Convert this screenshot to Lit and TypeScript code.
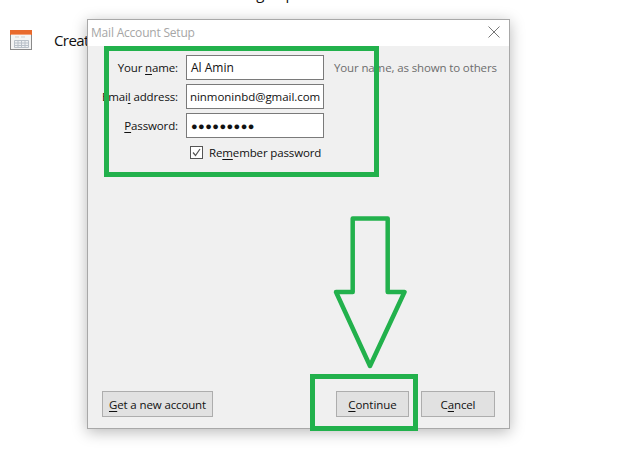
import { LitElement, html, css, svg } from "lit";
import { customElement } from "lit/decorators.js";

@customElement("app-root")
export class AppRoot extends LitElement {
  static styles = css`
    :host { display: block; }
    * { box-sizing: border-box; }
    .page {
      position: relative; width: 634px; height: 461px; overflow: hidden; background: #fff;
      font-family: "Open Sans", "Noto Sans", sans-serif; color: #111;
    }
    .cut { position: absolute; left: 216px; top: -16px; font-size: 15px; line-height: 18px; white-space: nowrap; word-spacing: 8px; }
    .task { display: flex; align-items: center; padding: 29px 0 0 10px; gap: 22px; font-size: 15px; letter-spacing: -.6px; height: 50px; }
    .task svg { display: block; flex: none; margin-top: 1px; }
    .dialog {
      position: absolute; left: 87px; top: 19px; width: 423px; height: 410px;
      border: 1px solid #a8a8a8; background: #f0f0f0; display: flex; flex-direction: column;
      box-shadow: 0 3px 14px rgba(0,0,0,.28);
    }
    .title {
      height: 26px; flex: none; background: #fff; display: flex; align-items: center; justify-content: space-between;
      padding: 0 9px 2px 3px; color: #a6a6a6; font-size: 12px; letter-spacing: -.2px;
    }
    .close { display: block; }
    .body { flex: 1; display: flex; flex-direction: column; justify-content: space-between; padding: 9px 14px 11px 14px; font-size: 11.5px; letter-spacing: -.13px; }
    .form { display: grid; grid-template-columns: 76px 138px auto; column-gap: 8px; row-gap: 4px; align-items: center; }
    .label { text-align: right; white-space: nowrap; justify-self: end; }
    .input {
      height: 25px; border: 1px solid #7a7a7a; background: #fff; display: flex; align-items: center; padding: 0 4px; white-space: nowrap; overflow: hidden; font-size: 12px; letter-spacing: 0;
    }
    .mail { padding: 0 3px; font-size: 11.5px; letter-spacing: -.05px; }
    .dots { font-size: 11px; letter-spacing: .45px; padding-left: 4px; }
    .hint { color: #6d6d6d; margin-left: 2px; white-space: nowrap; }
    .remember { grid-column: 2; display: flex; align-items: center; gap: 6px; padding: 3px 0 0 4px; white-space: nowrap; }
    .check { width: 13px; height: 13px; border: 1px solid #555; background: #fff; display: block; flex: none; }
    u { text-underline-offset: 2px; text-decoration-thickness: 1px; }
    .footer { display: flex; justify-content: space-between; }
    .right { display: flex; gap: 12px; }
    button {
      height: 26px; border: 1px solid #adadad; background: #e1e1e1; font: inherit; letter-spacing: inherit; color: #111; padding: 0; display: block;
    }
    .get { width: 111px; }
    .cont { width: 73px; letter-spacing: -.05px; }
    .cancel { width: 74px; }
    .marks { position: absolute; inset: 0; pointer-events: none; display: block; }
  `;

  render() {
    return html`<div class="page">
      <div class="cut">Setting up</div>
      <div class="task">
        <svg width="22" height="20" viewBox="0 0 22 20">
          <rect x=".5" y=".5" width="21" height="19" fill="#f4f4f4" stroke="#8a8a8a"/>
          <rect x="0" y="0" width="22" height="5" fill="#e8692c"/>
          <rect x="1" y="4" width="20" height="1" fill="#f3a078"/>
          <path d="M5 7h4M11 7h4" stroke="#cfcfcf" fill="none"/>
          <path d="M4.5 10.5h14v7h-14zM4.5 13h14M4.5 15.5h14M8 10.5v7M11.5 10.5v7M15 10.5v7" fill="#eef0f2" stroke="#b9c0c8"/>
        </svg>
        <span>Creat</span>
      </div>
      <div class="dialog">
        <div class="title">
          <span>Mail Account Setup</span>
          <svg class="close" width="12" height="12" viewBox="0 0 12 12"><path d="M.5.5l11 11M11.5.5l-11 11" stroke="#777" fill="none"/></svg>
        </div>
        <div class="body">
          <div class="form">
            <span class="label">Your <u>n</u>ame:</span>
            <div class="input">Al Amin</div>
            <span class="hint">Your name, as shown to others</span>
            <span class="label">Emai<u>l</u> address:</span>
            <div class="input mail">ninmoninbd@gmail.com</div>
            <span></span>
            <span class="label"><u>P</u>assword:</span>
            <div class="input dots">●●●●●●●●●</div>
            <span></span>
            <label class="remember">
              <svg class="check" viewBox="0 0 11 11"><path d="M2 5.5l2.5 3L9 2" fill="none" stroke="#555" stroke-width="1.2"/></svg>
              <span>Re<u>m</u>ember password</span>
            </label>
          </div>
          <div class="footer">
            <button class="get"><u>G</u>et a new account</button>
            <div class="right">
              <button class="cont"><u>C</u>ontinue</button>
              <button class="cancel">C<u>a</u>ncel</button>
            </div>
          </div>
        </div>
      </div>
      <svg class="marks" width="634" height="461" viewBox="0 0 634 461">
        ${svg`<rect x="106.5" y="48.5" width="270" height="126" fill="none" stroke="#22b14c" stroke-width="5"/>
        <rect x="312.5" y="376.5" width="103" height="52" fill="none" stroke="#22b14c" stroke-width="5"/>
        <path d="M387.7 218.5H352.7V292H336L370 366L404.5 292H387.7Z" fill="none" stroke="#22b14c" stroke-width="4.5" stroke-linejoin="round"/>`}
      </svg>
    </div>`;
  }
}
